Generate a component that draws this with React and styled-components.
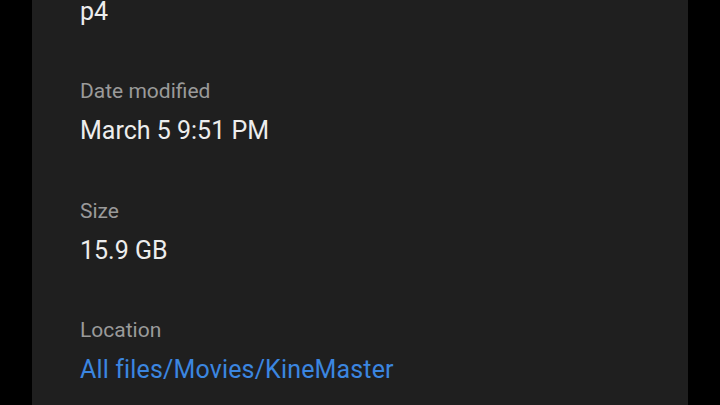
import React from "react";
import styled, { createGlobalStyle } from "styled-components";

const Global = createGlobalStyle`
  html, body { margin: 0; padding: 0; background: #000; }
  body { width: 720px; height: 405px; overflow: hidden; font-family: Roboto, "Noto Sans", sans-serif; }
`;

const Screen = styled.div`
  width: 720px;
  height: 405px;
  background: #000;
  display: flex;
  justify-content: center;
  overflow: hidden;
`;

const Panel = styled.div`
  width: 656px;
  height: 405px;
  background: #1f1f1f;
  box-sizing: border-box;
  padding: 0 48px;
  overflow: hidden;
  display: flex;
  flex-direction: column;
`;

const Field = styled.div`
  display: flex;
  flex-direction: column;
  gap: 10px;
  margin-bottom: 49.5px;
  flex-shrink: 0;
  &:first-child {
    margin-top: -4.5px;
  }
`;

const Label = styled.div`
  font-size: 21px;
  line-height: 28px;
  color: #9a9a9a;
`;

const Value = styled.div`
  font-size: 25px;
  line-height: 32px;
  letter-spacing: ${(p) => (p.$link ? "0.15px" : "0")};
  color: ${(p) => (p.$link ? "#3b86e0" : "#ededed")};
`;

const fields = [
  { label: "Date modified", value: "March 5 9:51 PM" },
  { label: "Size", value: "15.9 GB" },
  { label: "Location", value: "All files/Movies/KineMaster", link: true },
];

export default function App() {
  return (
    <>
      <Global />
      <Screen>
        <Panel>
          <Field>
            <Value>p4</Value>
          </Field>
          {fields.map((f) => (
            <Field key={f.label}>
              <Label>{f.label}</Label>
              <Value $link={f.link}>{f.value}</Value>
            </Field>
          ))}
        </Panel>
      </Screen>
    </>
  );
}
